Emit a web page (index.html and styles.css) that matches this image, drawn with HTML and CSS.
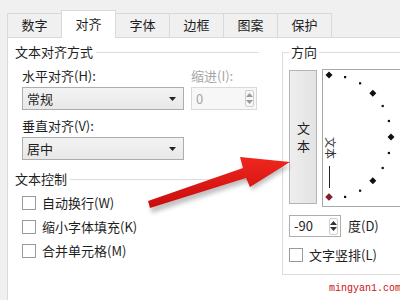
FILE: index.html
```html
<!DOCTYPE html>
<html lang="zh">
<head>
<meta charset="utf-8">
<link rel="stylesheet" href="styles.css">
</head>
<body>
<div class="dialog">
  <div class="tabs">
    <div class="tab">数字</div>
    <div class="tab active">对齐</div>
    <div class="tab">字体</div>
    <div class="tab">边框</div>
    <div class="tab">图案</div>
    <div class="tab">保护</div>
  </div>
  <div class="panel">
    <div class="left">
      <div class="group-title"><span>文本对齐方式</span><i class="rule"></i></div>
      <div class="indent">
        <div class="row-fields">
          <div class="field">
            <div class="label">水平对齐(H):</div>
            <div class="select"><span>常规</span><svg class="caret" width="7" height="4" viewBox="0 0 7 4"><polygon points="0,0 7,0 3.5,4" fill="#222"/></svg></div>
          </div>
          <div class="field disabled">
            <div class="label">缩进(I):</div>
            <div class="spin indent-spin"><span>0</span>
              <div class="spin-btns">
                <svg width="7" height="4" viewBox="0 0 7 4"><polygon points="0,4 7,4 3.5,0" fill="#9a9a9a"/></svg>
                <svg width="7" height="4" viewBox="0 0 7 4"><polygon points="0,0 7,0 3.5,4" fill="#9a9a9a"/></svg>
              </div>
            </div>
          </div>
        </div>
        <div class="field vfield">
          <div class="label">垂直对齐(V):</div>
          <div class="select"><span>居中</span><svg class="caret" width="7" height="4" viewBox="0 0 7 4"><polygon points="0,0 7,0 3.5,4" fill="#222"/></svg></div>
        </div>
      </div>
      <div class="group-title second"><span>文本控制</span><i class="rule"></i></div>
      <div class="indent checks">
        <div class="check"><i class="box"></i>自动换行(W)</div>
        <div class="check"><i class="box"></i>缩小字体填充(K)</div>
        <div class="check"><i class="box"></i>合并单元格(M)</div>
      </div>
    </div>
    <fieldset class="orient">
      <legend>方向</legend>
      <div class="orient-top">
        <div class="vtext-btn"><span>文本</span></div>
        <div class="dial">
          <svg width="77" height="136" viewBox="0 0 77 136">
            <g fill="#111">
              <polygon points="6,1.5 9.5,5 6,8.5 2.5,5"/>
              <rect x="21" y="6" width="2.2" height="2.2"/>
              <rect x="36" y="12.2" width="2.2" height="2.2"/>
              <polygon points="49.8,19.7 53.3,23.2 49.8,26.7 46.3,23.2"/>
              <rect x="58.6" y="34.9" width="2.2" height="2.2"/>
              <rect x="64.8" y="49.9" width="2.2" height="2.2"/>
              <polygon points="68,63.5 71.5,67 68,70.5 64.5,67"/>
              <rect x="64.8" y="81.9" width="2.2" height="2.2"/>
              <rect x="58.6" y="96.9" width="2.2" height="2.2"/>
              <polygon points="49.8,107.3 53.3,110.8 49.8,114.3 46.3,110.8"/>
              <rect x="36" y="119.6" width="2.2" height="2.2"/>
              <rect x="21" y="125.8" width="2.2" height="2.2"/>
            </g>
            <text class="dial-text" x="8" y="67" transform="rotate(90 8 67)">文本</text>
            <line x1="6.5" y1="96" x2="6.5" y2="118" stroke="#222" stroke-width="1"/>
            <polygon points="6,123 10,127 6,131 2,127" fill="#7d2230" stroke="#e3b7be" stroke-width="1"/>
          </svg>
        </div>
      </div>
      <div class="deg-row">
        <div class="spin deg-spin"><span>-90</span>
          <div class="spin-btns">
            <svg width="7" height="4" viewBox="0 0 7 4"><polygon points="0,4 7,4 3.5,0" fill="#333"/></svg>
            <svg width="7" height="4" viewBox="0 0 7 4"><polygon points="0,0 7,0 3.5,4" fill="#333"/></svg>
          </div>
        </div>
        <span class="deg-label">度(D)</span>
      </div>
      <div class="check vcheck"><i class="box"></i>文字竖排(L)</div>
    </fieldset>
  </div>
</div>
<svg class="arrow" width="400" height="300" viewBox="0 0 400 300">
  <defs>
    <filter id="sh" x="-20%" y="-20%" width="140%" height="140%">
      <feGaussianBlur stdDeviation="2"/>
    </filter>
    <linearGradient id="rg" x1="0" y1="0" x2="0" y2="1">
      <stop offset="0" stop-color="#f0261e"/>
      <stop offset="1" stop-color="#c80d0d"/>
    </linearGradient>
  </defs>
  <polygon points="150,206 244,173 242,162 291,166 252,190 248,182 152,213" fill="#777" opacity="0.45" filter="url(#sh)"/>
  <polygon points="148,201 243,168 240,157 290,162 250,187 246,178 150,208" fill="url(#rg)"/>
</svg>
<div class="watermark">mingyan1.com</div>
</body>
</html>
```
FILE: styles.css
```css
html, body {
  margin: 0;
  padding: 0;
}
body {
  width: 400px;
  height: 300px;
  overflow: hidden;
  position: relative;
  background: #f0f0f0;
  font-family: "Noto Sans CJK SC", "Microsoft YaHei", sans-serif;
  font-size: 13px;
  line-height: 18px;
  color: #1e1e1e;
}
.dialog {
  padding: 10px 0 0 7px;
}
.tabs {
  display: flex;
  align-items: flex-end;
  height: 27px;
  position: relative;
  z-index: 1;
}
.tab {
  width: 55px;
  height: 24px;
  box-sizing: border-box;
  border: 1px solid #d9d9d9;
  border-bottom: none;
  margin-right: -1px;
  background: #f0f0f0;
  text-align: center;
  line-height: 22px;
}
.tab.active {
  height: 28px;
  margin-bottom: -1px;
  background: #fff;
  line-height: 26px;
  position: relative;
  z-index: 2;
}
.panel {
  display: flex;
  align-items: flex-start;
  height: 262px;
  background: #fff;
  border: 1px solid #d9d9d9;
  border-right: none;
  border-bottom: none;
}
.left {
  width: 251px;
  box-sizing: border-box;
  padding-left: 7px;
  flex: none;
}
.group-title {
  display: flex;
  align-items: center;
  height: 18px;
  margin-top: 5px;
}
.group-title.second {
  margin-top: 10px;
}
.rule {
  flex: 1;
  height: 1px;
  background: #dcdcdc;
  margin-left: 3px;
}
.indent {
  padding-left: 7px;
}
.row-fields {
  display: flex;
  gap: 7px;
  margin-top: 6px;
}
.vfield {
  margin-top: 7px;
}
.label {
  height: 18px;
}
.field.disabled .label {
  color: #a6a6a6;
}
.select {
  margin-top: 2px;
  width: 162px;
  height: 23px;
  box-sizing: border-box;
  border: 1px solid #adadad;
  background: linear-gradient(#f3f3f3, #e8e8e8);
  display: flex;
  align-items: center;
  justify-content: space-between;
  padding: 0 7px 0 4px;
}
.spin {
  margin-top: 2px;
  height: 23px;
  box-sizing: border-box;
  border: 1px solid #adadad;
  background: #fff;
  display: flex;
  align-items: center;
  justify-content: space-between;
  padding: 0 2px 0 4px;
}
.indent-spin {
  width: 66px;
  border-color: #d9d9d9;
  background: #f7f7f7;
  color: #a6a6a6;
}
.spin-btns {
  width: 9px;
  height: 17px;
  box-sizing: border-box;
  border: 1px solid #cfcfcf;
  border-radius: 2px;
  display: flex;
  flex-direction: column;
  align-items: center;
  justify-content: space-around;
  padding: 1px 0;
}
.spin-btns svg {
  display: block;
}
.checks {
  margin-top: 3px;
}
.check {
  display: flex;
  align-items: center;
  height: 24px;
}
.box {
  width: 14px;
  height: 14px;
  box-sizing: border-box;
  border: 1px solid #9a9a9a;
  background: #fff;
  margin-right: 6px;
  flex: none;
}
.orient {
  margin: 5px 0 0 23px;
  width: 111px;
  flex: none;
  border: 1px solid #dcdcdc;
  border-right: none;
  padding: 0 0 7px 6px;
  min-width: 0;
}
.orient legend {
  padding: 0 2px;
  line-height: 18px;
}
.orient-top {
  display: flex;
  align-items: flex-start;
  margin-top: 8px;
}
.vtext-btn {
  width: 28px;
  height: 134px;
  margin-top: 1px;
  box-sizing: border-box;
  border: 1px solid #b4b4b4;
  background: linear-gradient(90deg, #eeeeee, #e3e3e3);
  display: flex;
  align-items: center;
  justify-content: center;
}
.vtext-btn span {
  writing-mode: vertical-rl;
  letter-spacing: 5px;
  margin-bottom: -5px;
}
.dial {
  margin-left: 5px;
  width: 78px;
  height: 138px;
  box-sizing: border-box;
  border: 1px solid #a8a8a8;
  border-right: none;
  background: #fff;
}
.dial svg {
  display: block;
  overflow: visible;
}
.dial-text {
  font-family: "Noto Sans CJK SC", sans-serif;
  font-size: 11px;
  dominant-baseline: central;
  fill: #333;
}
.deg-row {
  display: flex;
  align-items: center;
  margin-top: 8px;
}
.deg-spin {
  width: 52px;
  margin-top: 0;
  height: 22px;
}
.deg-label {
  margin-left: 7px;
}
.vcheck {
  margin-top: 6px;
}
.arrow {
  position: absolute;
  left: 0;
  top: 0;
  pointer-events: none;
}
.watermark {
  position: absolute;
  left: 329px;
  top: 283px;
  font-family: "Liberation Mono", monospace;
  font-size: 10px;
  line-height: 12px;
  color: #cc1111;
}
```
